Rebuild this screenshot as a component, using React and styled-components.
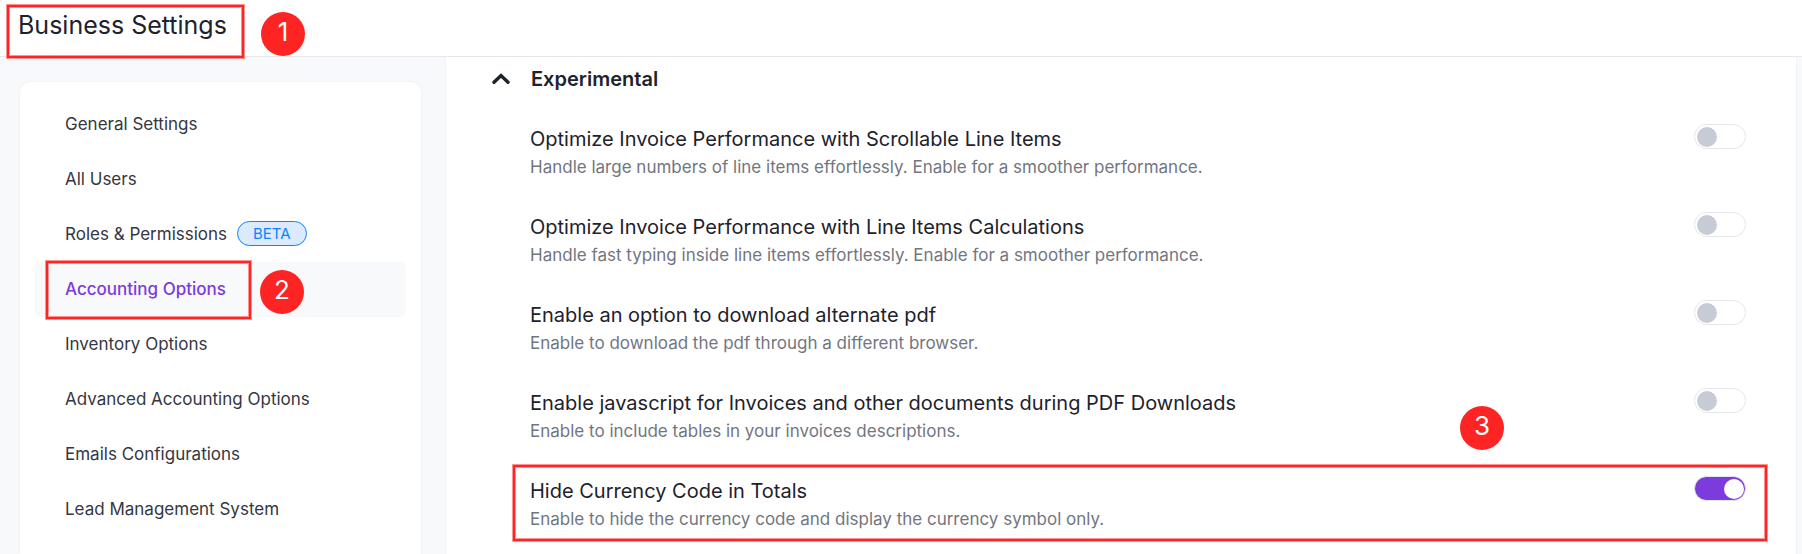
import React, { useState } from 'react';
import styled, { createGlobalStyle, css } from 'styled-components';

const GlobalStyle = createGlobalStyle`
  * {
    box-sizing: border-box;
  }

  body {
    margin: 0;
    background-color: #f7f9fb;
    color: #1e222b;
    font-family: Inter, 'Liberation Sans', sans-serif;
  }
`;

const Page = styled.div`
  display: flex;
  flex-direction: column;
  height: 100vh;
  overflow: hidden;
`;

const Header = styled.header`
  flex: none;
  background-color: #fff;
  border-bottom: 1px solid #e6e7ee;
  padding: 9px 18px 15px;
`;

const PageTitle = styled.h1`
  position: relative;
  width: fit-content;
  margin: 0;
  font-size: 25px;
  font-weight: 400;
  line-height: 32px;
`;

const Body = styled.div`
  flex: 1;
  min-height: 0;
  display: flex;
  padding-right: 5px;
`;

const Sidebar = styled.aside`
  flex: none;
  display: flex;
  width: 445px;
  padding: 25px 24px 0 20px;
`;

const Nav = styled.nav`
  flex: 1;
  background-color: #fff;
  border-radius: 10px 10px 0 0;
  box-shadow: 0 0 3px rgba(40, 50, 80, 0.06);
  padding: 15px;
`;

const NavItem = styled.a`
  position: relative;
  display: flex;
  align-items: center;
  height: 55px;
  padding: 0 30px 2px;
  border-radius: 6px;
  color: #343741;
  font-size: 17px;
  line-height: 24px;
  text-decoration: none;

  ${(props) =>
    props.$active &&
    css`
      background-color: #f8f9fb;
      color: #7c3bdc;
      font-weight: 500;
    `}
`;

const Beta = styled.span`
  margin-left: 10px;
  padding: 0 15px;
  border: 1px solid #0a84ff;
  border-radius: 13px;
  background-color: #dbebfd;
  color: #0a84ff;
  font-size: 15px;
  line-height: 23px;
`;

const Main = styled.main`
  flex: 1;
  min-width: 0;
  background-color: #fff;
  border: solid #f1f3f6;
  border-width: 0 1px;
  padding: 8px 50px 0 46px;
`;

const SectionButton = styled.button`
  display: flex;
  align-items: center;
  gap: 21px;
  padding: 0;
  border: 0;
  background: none;
  color: inherit;
  font-family: inherit;
  font-size: 20px;
  font-weight: 600;
  line-height: 28px;
`;

const Options = styled.div`
  padding: 31px 0 0 38px;
`;

const OptionRow = styled.div`
  position: relative;
  display: flex;
  align-items: flex-start;
  justify-content: space-between;
  height: 88px;
`;

const OptionText = styled.div`
  padding-top: 1px;
`;

const OptionLabel = styled.label`
  display: block;
  font-size: 20px;
  line-height: 28px;
`;

const OptionHint = styled.p`
  margin: 0;
  color: #72767f;
  font-size: 17px;
  line-height: 28px;
`;

const Toggle = styled.input.attrs({ type: 'checkbox', role: 'switch' })`
  appearance: none;
  flex: none;
  display: flex;
  align-items: center;
  width: 52px;
  height: 25px;
  margin: 0;
  padding: 0 2px;
  border: 1px solid #e6e7eb;
  border-radius: 13px;
  background-color: #fff;

  &::before {
    content: '';
    width: 20px;
    height: 20px;
    border-radius: 50%;
    background-color: #c7cbd5;
  }

  &:checked {
    justify-content: flex-end;
    padding: 0 1px;
    background-color: #7c3bdc;
  }

  &:checked::before {
    background-color: #fff;
  }
`;

// Callouts drawn over the page to mark the steps of the guide
const Outline = styled.div`
  position: absolute;
  inset: ${(props) => props.$inset};
  border: 2px solid #ff2424;
  box-shadow: 0 0 0 1px #ff9292, inset 0 0 0 1px #ff9292;
  pointer-events: none;
`;

const Step = styled.span`
  position: absolute;
  top: ${(props) => props.$top};
  left: ${(props) => props.$left};
  right: ${(props) => props.$right};
  width: 44px;
  height: 44px;
  border-radius: 50%;
  background-color: #ff2424;
  color: #fff;
  font-size: 26px;
  font-weight: 400;
  line-height: 39px;
  text-align: center;
`;

const navItems = [
  { label: 'General Settings' },
  { label: 'All Users' },
  { label: 'Roles & Permissions', beta: true },
  { label: 'Accounting Options', active: true },
  { label: 'Inventory Options' },
  { label: 'Advanced Accounting Options' },
  { label: 'Emails Configurations' },
  { label: 'Lead Management System' },
];

const options = [
  {
    id: 'scrollable-items',
    label: 'Optimize Invoice Performance with Scrollable Line Items',
    hint: 'Handle large numbers of line items effortlessly. Enable for a smoother performance.',
  },
  {
    id: 'item-calculations',
    label: 'Optimize Invoice Performance with Line Items Calculations',
    hint: 'Handle fast typing inside line items effortlessly. Enable for a smoother performance.',
  },
  {
    id: 'alternate-pdf',
    label: 'Enable an option to download alternate pdf',
    hint: 'Enable to download the pdf through a different browser.',
  },
  {
    id: 'pdf-javascript',
    label: 'Enable javascript for Invoices and other documents during PDF Downloads',
    hint: 'Enable to include tables in your invoices descriptions.',
  },
  {
    id: 'hide-currency',
    label: 'Hide Currency Code in Totals',
    hint: 'Enable to hide the currency code and display the currency symbol only.',
    marked: true,
  },
];

const Chevron = () => (
  <svg width="18" height="12" viewBox="0 0 18 12" fill="none" aria-hidden="true">
    <path d="M2 9.3L9 2.5L16 9.3" stroke="currentColor" strokeWidth="3.4" strokeLinecap="round" />
  </svg>
);

const App = () => {
  const [open, setOpen] = useState(true);
  const [enabled, setEnabled] = useState({ 'hide-currency': true });

  const toggle = (id) => setEnabled((prev) => ({ ...prev, [id]: !prev[id] }));

  return (
    <>
      <GlobalStyle />
      <Page>
        <Header>
          <PageTitle>
            Business Settings
            <Outline $inset="-4px -17px -17px -11px" />
            <Step $top="3px" $left="243px">1</Step>
          </PageTitle>
        </Header>
        <Body>
          <Sidebar>
            <Nav>
              {navItems.map((item) => (
                <NavItem key={item.label} href="#" $active={item.active}>
                  {item.label}
                  {item.beta && <Beta>BETA</Beta>}
                  {item.active && (
                    <>
                      <Outline $inset="-1px 155px -2px 11px" />
                      <Step $top="8px" $left="225px">2</Step>
                    </>
                  )}
                </NavItem>
              ))}
            </Nav>
          </Sidebar>
          <Main>
            <SectionButton aria-expanded={open} onClick={() => setOpen(!open)}>
              <Chevron />
              Experimental
            </SectionButton>
            {open && (
              <Options>
                {options.map((option) => (
                  <OptionRow key={option.id}>
                    <OptionText>
                      <OptionLabel htmlFor={option.id}>{option.label}</OptionLabel>
                      <OptionHint id={`${option.id}-hint`}>{option.hint}</OptionHint>
                    </OptionText>
                    <Toggle
                      id={option.id}
                      aria-describedby={`${option.id}-hint`}
                      checked={!!enabled[option.id]}
                      onChange={() => toggle(option.id)}
                    />
                    {option.marked && (
                      <>
                        <Outline $inset="-11px -21px 23px -17px" />
                        <Step $top="-70px" $right="242px">3</Step>
                      </>
                    )}
                  </OptionRow>
                ))}
              </Options>
            )}
          </Main>
        </Body>
      </Page>
    </>
  );
};

export default App;
